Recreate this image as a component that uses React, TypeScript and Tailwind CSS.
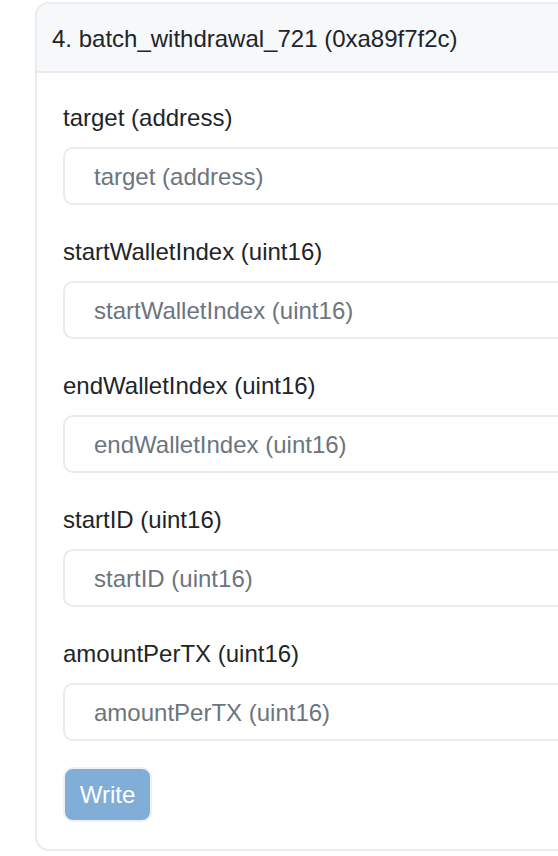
import React from "react";

const fields = [
  "target (address)",
  "startWalletIndex (uint16)",
  "endWalletIndex (uint16)",
  "startID (uint16)",
  "amountPerTX (uint16)",
];

export default function App() {
  return (
    <div
      className="w-[558px] h-[856px] overflow-hidden bg-white pt-[2px] pl-[35px]"
      style={{ fontFamily: '"Liberation Sans", Arial, sans-serif' }}
    >
      <div className="w-[640px] border-2 border-[#e9ebef] rounded-[14px] overflow-hidden bg-white">
        <div className="h-[69px] bg-[#f7f8fa] border-b-2 border-[#e9ebef] flex items-center pl-[15px] pt-[2px] text-[24px] text-[#212529]">
          4. batch_withdrawal_721 (0xa89f7f2c)
        </div>
        <div className="pl-[26px] pt-[30px] pb-[27px] flex flex-col">
          <div className="flex flex-col gap-[32px] mb-[26px]">
            {fields.map((f) => (
              <div key={f} className="flex flex-col">
                <label className="text-[24px] leading-[30px] text-[#212529] mb-[14px]">{f}</label>
                <input
                  placeholder={f}
                  className="h-[58px] w-full border-2 border-[#e9ebef] rounded-[10px] pl-[29px] pt-[2px] text-[24px] text-[#212529] placeholder:text-[#6c757d] outline-none bg-white"
                />
              </div>
            ))}
          </div>
          <div>
            <button className="w-[89px] h-[55px] bg-[#80aed6] text-white text-[24px] rounded-[10px] border-2 border-[#eef2f6]">
              Write
            </button>
          </div>
        </div>
      </div>
    </div>
  );
}
